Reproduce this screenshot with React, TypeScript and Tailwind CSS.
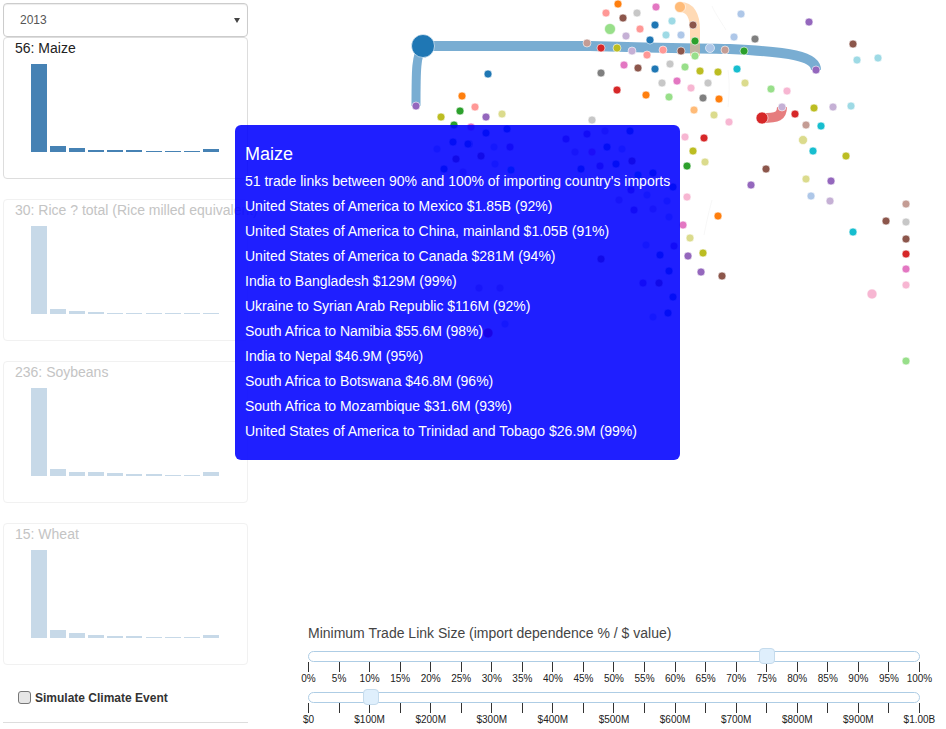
const FONT = "font-['Liberation_Sans',Arial,sans-serif]";

const CATEGORIES = [
  { title: '56: Maize', bars: [88, 6.5, 4.5, 2.5, 2.5, 2, 1, 1.5, 1, 3], active: true },
  { title: '30: Rice ? total (Rice milled equivalent)', bars: [88, 5, 3, 2, 1.5, 1, 1, 1, 1, 1], active: false },
  { title: '236: Soybeans', bars: [88, 7, 4, 4, 3, 2, 2, 1.5, 1, 4.5], active: false },
  { title: '15: Wheat', bars: [88, 8, 5, 3, 2, 2, 1.5, 1.5, 1, 3], active: false },
];

const TRADE_LINKS = [
  'United States of America to Mexico $1.85B (92%)',
  'United States of America to China, mainland $1.05B (91%)',
  'United States of America to Canada $281M (94%)',
  'India to Bangladesh $129M (99%)',
  'Ukraine to Syrian Arab Republic $116M (92%)',
  'South Africa to Namibia $55.6M (98%)',
  'India to Nepal $46.9M (95%)',
  'South Africa to Botswana $46.8M (96%)',
  'South Africa to Mozambique $31.6M (93%)',
  'United States of America to Trinidad and Tobago $26.9M (99%)',
];

// x, y, colour, radius (4 when left out)
const NODES: [number, number, string, number?][] = [
  [618, 4, '#ff7f0e'], [656, 7, '#e377c2'], [606, 13, '#ff9896'], [637, 13, '#c7c7c7'],
  [623, 18, '#8c564b'], [693, 25, '#8c564b'], [655, 25, '#1f77b4'], [672, 21, '#9edae5'],
  [610, 29, '#98df8a', 5.5], [640, 29, '#ff9896'], [626, 36, '#c5b0d5'], [666, 35, '#9edae5'],
  [681, 35, '#aec7e8'], [650, 40, '#1f77b4'], [695, 41, '#2ca02c'], [587, 43, '#c49c94'],
  [601, 48, '#d62728'], [617, 48, '#bcbd22'], [632, 51, '#c5b0d5'], [647, 55, '#ff9896'],
  [663, 50, '#ff9896'], [681, 51, '#8c564b'], [695, 56, '#98df8a'], [624, 65, '#e377c2'],
  [638, 68, '#8c564b'], [655, 69, '#1f77b4'], [670, 64, '#c7c7c7'], [685, 67, '#98df8a'],
  [700, 71, '#bcbd22'], [601, 73, '#7f7f7f'], [662, 83, '#c7c7c7'], [677, 81, '#e377c2'],
  [691, 88, '#f7b6d2'], [617, 90, '#d62728'], [646, 95, '#ff7f0e'], [669, 97, '#98df8a'],
  [694, 110, '#ffbb78'], [592, 120, '#c7c7c7'], [488, 74, '#1f77b4'], [462, 96, '#ff7f0e'],
  [475, 107, '#ff9896'], [460, 111, '#2ca02c'], [441, 117, '#bcbd22'], [486, 117, '#9467bd'],
  [502, 114, '#dbdb8d'], [454, 125, '#2ca02c'], [416, 106, '#9467bd'], [741, 14, '#aec7e8'],
  [809, 22, '#9467bd'], [734, 37, '#aec7e8'], [755, 39, '#7f7f7f'], [853, 44, '#8c564b'],
  [710, 48, '#aec7e8', 4.5], [725, 50, '#c49c94'], [744, 51, '#2ca02c'], [857, 60, '#9edae5'],
  [878, 58, '#9edae5'], [816, 70, '#9467bd'], [718, 72, '#bcbd22'], [737, 69, '#17becf'],
  [745, 83, '#dbdb8d'], [708, 83, '#c7c7c7'], [771, 89, '#98df8a'], [787, 91, '#f7b6d2'],
  [703, 98, '#7f7f7f'], [719, 99, '#ff7f0e'], [714, 115, '#dbdb8d'], [729, 122, '#f7b6d2'],
  [782, 107, '#c5b0d5'], [795, 114, '#d62728'], [814, 108, '#bcbd22'], [833, 107, '#c5b0d5'],
  [851, 106, '#9edae5'], [806, 125, '#c49c94'], [821, 126, '#17becf'], [803, 140, '#dbdb8d', 4.5],
  [685, 137, '#f7b6d2'], [704, 138, '#d62728'], [813, 151, '#17becf'], [693, 151, '#bcbd22'],
  [846, 156, '#bcbd22'], [705, 162, '#dbdb8d'], [687, 166, '#2ca02c'], [766, 169, '#8c564b'],
  [751, 185, '#9467bd'], [806, 179, '#dbdb8d'], [831, 181, '#9467bd'], [811, 196, '#aec7e8'],
  [687, 197, '#f7b6d2'], [830, 201, '#c5b0d5'], [718, 216, '#ff7f0e'], [690, 238, '#dbdb8d'],
  [683, 225, '#e377c2'], [703, 253, '#bcbd22'], [688, 256, '#9467bd'], [701, 272, '#9467bd'],
  [722, 276, '#8c564b'], [853, 232, '#17becf'], [886, 221, '#8c564b'], [906, 204, '#c49c94'],
  [906, 222, '#c7c7c7'], [906, 239, '#8c564b'], [906, 254, '#d62728'], [906, 269, '#e377c2'],
  [906, 285, '#f7b6d2'], [872, 294, '#f7b6d2', 5], [906, 361, '#98df8a'],
  // under the tooltip, they only show as a darker spot
  [471, 127, '#e377c2'], [486, 133, '#1f77b4'], [507, 129, '#1f77b4'], [469, 144, '#1f77b4'],
  [494, 147, '#aec7e8'], [510, 147, '#9467bd'], [481, 156, '#8c564b'], [495, 164, '#aec7e8'],
  [511, 170, '#17becf'], [566, 139, '#9467bd'], [587, 134, '#9467bd'], [605, 131, '#c5b0d5'],
  [630, 131, '#1f77b4'], [607, 147, '#1f77b4'], [575, 152, '#c5b0d5'], [592, 152, '#e377c2'],
  [622, 149, '#aec7e8'], [632, 161, '#8c564b'], [616, 164, '#1f77b4'], [600, 166, '#9467bd'],
  [581, 169, '#1f77b4'], [638, 175, '#17becf'], [653, 173, '#1f77b4'], [673, 187, '#1f77b4'],
  [631, 190, '#9467bd'], [647, 195, '#aec7e8'], [667, 201, '#aec7e8'], [619, 200, '#c5b0d5'],
  [634, 210, '#9467bd'], [653, 209, '#c5b0d5'], [669, 217, '#aec7e8'], [646, 245, '#aec7e8'],
  [674, 246, '#9467bd'], [660, 255, '#1f77b4'], [601, 259, '#8c564b'], [669, 271, '#1f77b4'],
  [643, 283, '#9467bd'], [659, 283, '#8c564b'], [673, 297, '#1f77b4'], [653, 317, '#aec7e8'],
  [668, 313, '#1f77b4'], [479, 288, '#c5b0d5'], [500, 288, '#c5b0d5'], [505, 324, '#aec7e8'],
  [488, 333, '#d62728', 5], [453, 142, '#1f77b4'], [437, 149, '#aec7e8'], [468, 144, '#1f77b4'],
  [456, 159, '#8c564b'], [444, 169, '#1f77b4'], [463, 172, '#c5b0d5'],
];

const PCT_LABELS = Array.from({ length: 21 }, (_, i) => `${i * 5}%`);
const USD_LABELS = ['$0', '', '$100M', '', '$200M', '', '$300M', '', '$400M', '', '$500M', '', '$600M', '', '$700M', '', '$800M', '', '$900M', '', '$1.00B'];

function CategoryCard({ title, bars, active }: { title: string; bars: number[]; active: boolean }) {
  return (
    <div className={`h-[142px] w-[245px] rounded border ${active ? 'border-[#ddd]' : 'border-[#f1f1f1]'}`}>
      <div className={`pl-[11px] text-sm leading-5 whitespace-nowrap ${active ? 'text-[#222]' : 'text-[#c4c4c4]'}`}>{title}</div>
      <div className="mt-[6px] ml-[27px] flex h-[88px] items-end gap-[3.1px]">
        {bars.map((h, i) => (
          <div
            key={i}
            className={`w-4 ${active ? 'bg-[#4682b4]' : 'bg-[#c7d9e8]'}`}
            style={{ height: h }}
          />
        ))}
      </div>
    </div>
  );
}

function SliderRow({ labels, handleClass }: { labels: string[]; handleClass: string }) {
  return (
    <div className="w-[612px]">
      <div className="relative h-[11px] rounded-full border border-[#aecde5] bg-white">
        <div className={`absolute top-[-4px] h-[16px] w-[16px] rounded border border-[#c5dbec] bg-[#dfeffc] ${handleClass}`} />
      </div>
      <div className="flex justify-between">
        {labels.map((_, i) => (
          <div key={i} className="h-[10px] w-px bg-[#333]" />
        ))}
      </div>
      <div className="mt-px flex justify-between text-[10px] leading-3 text-[#222]">
        {labels.map((label, i) => (
          <div key={i} className="flex w-px justify-center whitespace-nowrap">{label}</div>
        ))}
      </div>
    </div>
  );
}

export default function App() {
  return (
    <div className={`relative flex h-[729px] w-[946px] overflow-hidden bg-white ${FONT}`}>
      <div className="flex w-[248px] shrink-0 flex-col pt-[3px] pl-[3px]">
        <div className="flex h-[34px] w-[245px] items-center justify-between rounded border border-[#ccc] pr-[7px] pl-4 text-xs text-[#555] shadow-[inset_0_1px_1px_rgba(0,0,0,0.075)]">
          <span>2013</span>
          <svg width="6" height="5" viewBox="0 0 6 5">
            <polygon points="0,0 6,0 3,5" fill="#444" />
          </svg>
        </div>
        <div className="flex flex-col gap-5">
          {CATEGORIES.map((c) => (
            <CategoryCard key={c.title} title={c.title} bars={c.bars} active={c.active} />
          ))}
        </div>
        <label className="mt-[25px] ml-[15px] flex items-center gap-[4px] text-xs font-bold text-[#333]">
          <input
            type="checkbox"
            className="mb-[2px] h-[13px] w-[13px] appearance-none rounded-[3px] border border-[#777] bg-[#e6e6e6]"
          />
          Simulate Climate Event
        </label>
        <div className="mt-[16px] w-[245px] border-t border-[#ddd]" />
      </div>

      <div className="flex min-w-0 flex-1 flex-col">
        <svg width="698" height="623" viewBox="248 0 698 623" className="shrink-0">
          <g fill="none" stroke="#eee" strokeWidth="0.5">
            <path d="M712 200 C708 215 706 225 704 235" />
            <path d="M728 70 C730 85 729 95 728 107" />
            <path d="M712 6 C716 15 720 20 726 30" />
          </g>
          <g fill="none" strokeOpacity="0.6">
            <path d="M423 46 C416 55 416 70 416 106" stroke="#1f77b4" strokeWidth="9" />
            <path d="M423 46 L590 46 C680 49 700 48 730 49 C790 52 816 56 816 70" stroke="#1f77b4" strokeWidth="10" />
            <path d="M680 7 C690 7 695 15 695 30 L695 56" stroke="#ffbb78" strokeWidth="10" strokeOpacity="0.55" />
            <path d="M762 118 C778 118 782 116 782 107" stroke="#d62728" strokeWidth="10" />
          </g>
          <g stroke="#fff" strokeOpacity="0.6" strokeWidth="1">
            {NODES.map(([x, y, color, r], i) => (
              <circle key={i} cx={x} cy={y} r={r ?? 4} fill={color} />
            ))}
            <circle cx="680" cy="7" r="5.5" fill="#ffbb78" />
            <circle cx="762" cy="118" r="6" fill="#d62728" />
            <circle cx="423" cy="46" r="11.5" fill="#1f77b4" />
          </g>
        </svg>
        <div className="pl-[60px]">
          <div className="text-sm leading-5 text-[#444]">Minimum Trade Link Size (import dependence % / $ value)</div>
          <div className="mt-2">
            <SliderRow labels={PCT_LABELS} handleClass="left-[450px]" />
          </div>
          <div className="mt-[7px]">
            <SliderRow labels={USD_LABELS} handleClass="left-[54px]" />
          </div>
        </div>
      </div>

      <div className="absolute top-[125px] left-[235px] h-[335px] w-[445px] rounded-md bg-[rgba(0,0,255,0.88)] pt-[17px] pl-[10px] text-sm whitespace-nowrap text-white">
        <div className="text-lg leading-6">Maize</div>
        <div className="mt-[3px] leading-[25px]">51 trade links between 90% and 100% of importing country's imports</div>
        {TRADE_LINKS.map((link) => (
          <div key={link} className="leading-[25px]">{link}</div>
        ))}
      </div>
    </div>
  );
}
